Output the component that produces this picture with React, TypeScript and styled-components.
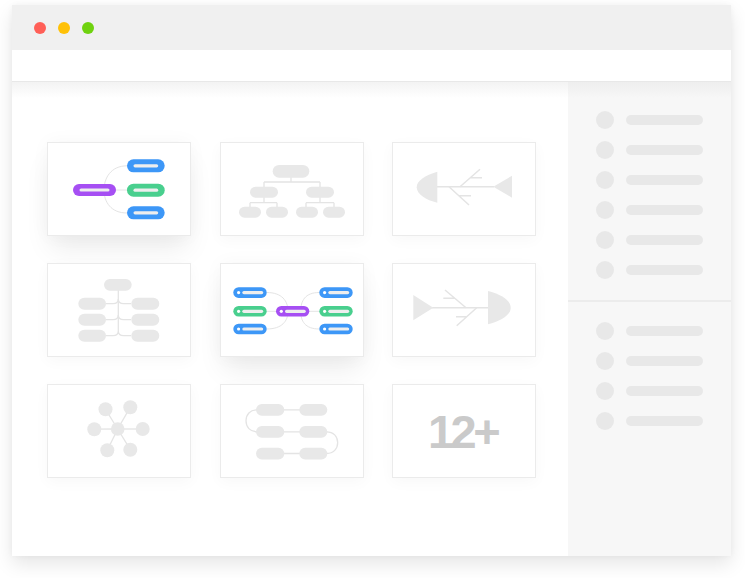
import styled, { createGlobalStyle } from "styled-components";

const BLUE = "#3d97f7";
const GREEN = "#49cf8e";
const PURPLE = "#a64ff3";
const SHAPE = "#e8e8e8";
const LINE = "#e4e4e4";

const GlobalStyle = createGlobalStyle`
  html, body {
    margin: 0;
    padding: 0;
    background: #ffffff;
    font-family: "Liberation Sans", Arial, sans-serif;
  }
`;

const Page = styled.div`
  padding: 5px 0 24px 12px;
`;

const Window = styled.div`
  width: 719px;
  height: 551px;
  display: flex;
  flex-direction: column;
  background: #ffffff;
  box-shadow: 0 8px 18px rgba(0, 0, 0, 0.1), 0 0 6px rgba(0, 0, 0, 0.04);
`;

const TitleBar = styled.div`
  height: 45px;
  flex-shrink: 0;
  display: flex;
  align-items: center;
  gap: 12px;
  padding-left: 22px;
  background: #f0f0f0;
`;

const Dot = styled.span<{ $color: string }>`
  width: 12px;
  height: 12px;
  border-radius: 50%;
  background: ${({ $color }) => $color};
`;

const AddressBar = styled.div`
  height: 31px;
  flex-shrink: 0;
  background: #ffffff;
  border-bottom: 1px solid #e8e8e8;
`;

const Body = styled.div`
  flex: 1;
  display: flex;
  min-height: 0;
`;

const Main = styled.div`
  width: 556px;
  box-sizing: border-box;
  padding: 60px 0 0 35px;
  background: linear-gradient(to bottom, #f3f3f3, #ffffff 16px);
`;

const Grid = styled.div`
  display: grid;
  grid-template-columns: repeat(3, 144px);
  grid-auto-rows: 94px;
  column-gap: 28.5px;
  row-gap: 27px;
`;

const Card = styled.div<{ $raised?: boolean }>`
  box-sizing: border-box;
  border: 1px solid #ebebeb;
  background: #ffffff;
  display: flex;
  align-items: center;
  justify-content: center;
  box-shadow: ${({ $raised }) =>
    $raised
      ? "0 16px 26px -4px rgba(0, 0, 0, 0.08), 0 0 18px rgba(0, 0, 0, 0.035)"
      : "0 4px 14px rgba(0, 0, 0, 0.03)"};

  svg {
    display: block;
  }
`;

const BigCount = styled.span`
  font-family: "Liberation Sans", Arial, sans-serif;
  font-weight: 700;
  font-size: 47px;
  letter-spacing: -3.5px;
  color: #cacaca;
  line-height: 1;
  margin-left: -3px;
`;

const Sidebar = styled.div`
  flex: 1;
  display: flex;
  flex-direction: column;
  background: linear-gradient(to bottom, #eeeeee, #f7f7f7 16px);
`;

const SideSection = styled.div<{ $top: number; $bottom: number }>`
  display: flex;
  flex-direction: column;
  gap: 12px;
  padding: ${({ $top, $bottom }) => `${$top}px 0 ${$bottom}px 28px`};
`;

const Divider = styled.div`
  height: 2px;
  background: #ececec;
`;

const SideItem = styled.div`
  display: flex;
  align-items: center;
  gap: 12px;
`;

const SideCircle = styled.span`
  width: 18px;
  height: 18px;
  border-radius: 50%;
  background: #e8e8e8;
`;

const SideLine = styled.span`
  width: 77px;
  height: 10px;
  border-radius: 5px;
  background: #e8e8e8;
`;

const Pill = ({
  x,
  y,
  w,
  h,
  fill = SHAPE,
}: {
  x: number;
  y: number;
  w: number;
  h: number;
  fill?: string;
}) => <rect x={x} y={y} width={w} height={h} rx={h / 2} fill={fill} />;

const ColorPill = ({
  x,
  y,
  w,
  h,
  fill,
  dot,
}: {
  x: number;
  y: number;
  w: number;
  h: number;
  fill: string;
  dot?: boolean;
}) => {
  const cy = y + h / 2;
  const barX = dot ? x + 9 : x + 6.5;
  const barW = dot ? w - 12.5 : w - 13;
  return (
    <g>
      <rect x={x} y={y} width={w} height={h} rx={h / 2} fill={fill} />
      {dot && <circle cx={x + 5.3} cy={cy} r={1.6} fill="#ffffff" />}
      <rect
        x={barX}
        y={cy - 1.6}
        width={barW}
        height={3.2}
        rx={1.6}
        fill="#eeeeee"
      />
    </g>
  );
};

const MindMapCard = () => (
  <svg width="142" height="92" viewBox="1 1 142 92">
    <g fill="none" stroke={LINE} strokeWidth="1">
      <path d="M80 23.8 C64 23.8 57 36 57 48 C57 60 64 71 80 71" />
      <path d="M69 48 H80" />
    </g>
    <ColorPill x={26} y={42} w={43} h={12} fill={PURPLE} />
    <ColorPill x={80} y={17.3} w={37.7} h={13} fill={BLUE} />
    <ColorPill x={80} y={41.7} w={37.7} h={13} fill={GREEN} />
    <ColorPill x={80} y={64.3} w={37.7} h={13} fill={BLUE} />
  </svg>
);

const OrgChartCard = () => (
  <svg width="142" height="92" viewBox="1 1 142 92">
    <g fill="none" stroke={LINE} strokeWidth="1.3">
      <path d="M71 35 V40 M44 40 H100 M44 40 V45 M100 40 V45" />
      <path d="M44 55 V60.7 M100 55 V60.7 M30 60.7 H57 M86 60.7 H114" />
      <path d="M30 60.7 V65 M57 60.7 V65 M86 60.7 V65 M114 60.7 V65" />
    </g>
    <Pill x={52.7} y={23} w={36.6} h={12.7} />
    <Pill x={30} y={44.7} w={28} h={11} />
    <Pill x={86} y={44.7} w={28} h={11} />
    <Pill x={19} y={64.7} w={22} h={11} />
    <Pill x={46} y={64.7} w={22} h={11} />
    <Pill x={76} y={64.7} w={22} h={11} />
    <Pill x={103} y={64.7} w={22} h={11} />
  </svg>
);

const FishLeftCard = () => (
  <svg width="142" height="92" viewBox="1 1 142 92">
    <g fill="none" stroke={LINE} strokeWidth="1.5">
      <path d="M45 44.7 H102" />
      <path d="M68 44.7 L88 27.3 M78.5 35.7 H90" />
      <path d="M57 44.7 L77 63 M66.8 53.7 H79" />
    </g>
    <path
      d="M45.3 29.7 L45.3 60.7 C34 58 24.7 52 24.7 45.2 C24.7 38.5 33 33.5 45.3 29.7 Z"
      fill={SHAPE}
    />
    <path d="M101.3 44.7 L120 33.7 L120 55.7 Z" fill={SHAPE} />
  </svg>
);

const LogicTreeCard = () => (
  <svg width="142" height="92" viewBox="1 1 142 92">
    <g fill="none" stroke={LINE} strokeWidth="1.3">
      <path d="M71.3 27 V68" />
      <path d="M59 40.7 H66 Q71.3 40.7 71.3 36 M84 40.7 H76.6 Q71.3 40.7 71.3 36" />
      <path d="M59 56.7 H66 Q71.3 56.7 71.3 52 M84 56.7 H76.6 Q71.3 56.7 71.3 52" />
      <path d="M59 72.7 H66 Q71.3 72.7 71.3 68 M84 72.7 H76.6 Q71.3 72.7 71.3 68" />
    </g>
    <Pill x={57} y={16} w={27.7} h={11.7} />
    {[34.7, 50.7, 66.7].map((y) => (
      <g key={y}>
        <Pill x={31.3} y={y} w={27.7} h={12} />
        <Pill x={84.3} y={y} w={28} h={12} />
      </g>
    ))}
  </svg>
);

const BothSidesCard = () => (
  <svg width="142" height="92" viewBox="1 1 142 92">
    <g fill="none" stroke={LINE} strokeWidth="1">
      <path d="M46.7 29.5 C62 29.5 68 38 68 48.3 C68 58 62 66 46.7 66" />
      <path d="M99.3 29.5 C85 29.5 80.7 38 80.7 48.3 C80.7 58 85 66 99.3 66" />
      <path d="M46.7 48.3 H56 M89.3 48.3 H99.3" />
    </g>
    <ColorPill x={13.3} y={24.3} w={33.4} h={10.6} fill={BLUE} dot />
    <ColorPill x={13.3} y={43} w={33.4} h={10.6} fill={GREEN} dot />
    <ColorPill x={13.3} y={60.7} w={33.4} h={10.6} fill={BLUE} dot />
    <ColorPill x={56} y={43} w={33.3} h={10.6} fill={PURPLE} dot />
    <ColorPill x={99.3} y={24.3} w={33.4} h={10.6} fill={BLUE} dot />
    <ColorPill x={99.3} y={43} w={33.4} h={10.6} fill={GREEN} dot />
    <ColorPill x={99.3} y={60.7} w={33.4} h={10.6} fill={BLUE} dot />
  </svg>
);

const FishRightCard = () => (
  <svg width="142" height="92" viewBox="1 1 142 92">
    <g fill="none" stroke={LINE} strokeWidth="1.5">
      <path d="M40 44.7 H97" />
      <path d="M53 27 L74 44.7 M51.3 35.3 H63" />
      <path d="M84.7 44.7 L64.7 62.7 M64 53.7 H75" />
    </g>
    <path d="M21.3 32 L21.3 57.3 L41.3 44.7 Z" fill={SHAPE} />
    <path
      d="M96 28 C108 31 118.7 37 118.7 44.7 C118.7 52.4 108 58.3 96 61.3 Z"
      fill={SHAPE}
    />
  </svg>
);

const outerNodes: [number, number][] = [
  [58.5, 25.3],
  [83.3, 23.2],
  [47.3, 45.2],
  [95.7, 45],
  [60.3, 66.3],
  [83.3, 65.7],
];

const RadialCard = () => (
  <svg width="142" height="92" viewBox="1 1 142 92">
    <g stroke={LINE} strokeWidth="1.3">
      {outerNodes.map(([x, y]) => (
        <line key={`${x}-${y}`} x1={70.7} y1={45} x2={x} y2={y} />
      ))}
    </g>
    <circle cx={70.7} cy={45} r={6.8} fill={SHAPE} />
    {outerNodes.map(([x, y]) => (
      <circle key={`c-${x}-${y}`} cx={x} cy={y} r={7} fill={SHAPE} />
    ))}
  </svg>
);

const SnakeCard = () => (
  <svg width="142" height="92" viewBox="1 1 142 92">
    <g fill="none" stroke={LINE} strokeWidth="1.3">
      <path d="M64 25.8 H80 M64 47.8 H80 M64 69.5 H80" />
      <path d="M37 25.8 C30 25.8 26 30.5 26 36.8 C26 43 30 47.8 37 47.8" />
      <path d="M106.5 47.8 C113.5 47.8 117.7 52.5 117.7 58.6 C117.7 64.8 113.5 69.5 106.5 69.5" />
    </g>
    {[20, 42, 63.7].map((y) => (
      <g key={y}>
        <Pill x={36} y={y} w={28.3} h={11.7} />
        <Pill x={79.3} y={y} w={28} h={11.7} />
      </g>
    ))}
  </svg>
);

const sideGroups = [6, 4];

const App = () => {
  return (
    <>
      <GlobalStyle />
      <Page>
        <Window>
          <TitleBar>
            <Dot $color="#ff5f57" />
            <Dot $color="#ffc107" />
            <Dot $color="#6fd20f" />
          </TitleBar>
          <AddressBar />
          <Body>
            <Main>
              <Grid>
                <Card $raised>
                  <MindMapCard />
                </Card>
                <Card>
                  <OrgChartCard />
                </Card>
                <Card>
                  <FishLeftCard />
                </Card>
                <Card>
                  <LogicTreeCard />
                </Card>
                <Card $raised>
                  <BothSidesCard />
                </Card>
                <Card>
                  <FishRightCard />
                </Card>
                <Card>
                  <RadialCard />
                </Card>
                <Card>
                  <SnakeCard />
                </Card>
                <Card>
                  <BigCount>12+</BigCount>
                </Card>
              </Grid>
            </Main>
            <Sidebar>
              <SideSection $top={29} $bottom={21}>
                {Array.from({ length: sideGroups[0] }).map((_, i) => (
                  <SideItem key={i}>
                    <SideCircle />
                    <SideLine />
                  </SideItem>
                ))}
              </SideSection>
              <Divider />
              <SideSection $top={20} $bottom={0}>
                {Array.from({ length: sideGroups[1] }).map((_, i) => (
                  <SideItem key={i}>
                    <SideCircle />
                    <SideLine />
                  </SideItem>
                ))}
              </SideSection>
            </Sidebar>
          </Body>
        </Window>
      </Page>
    </>
  );
};

export default App;
